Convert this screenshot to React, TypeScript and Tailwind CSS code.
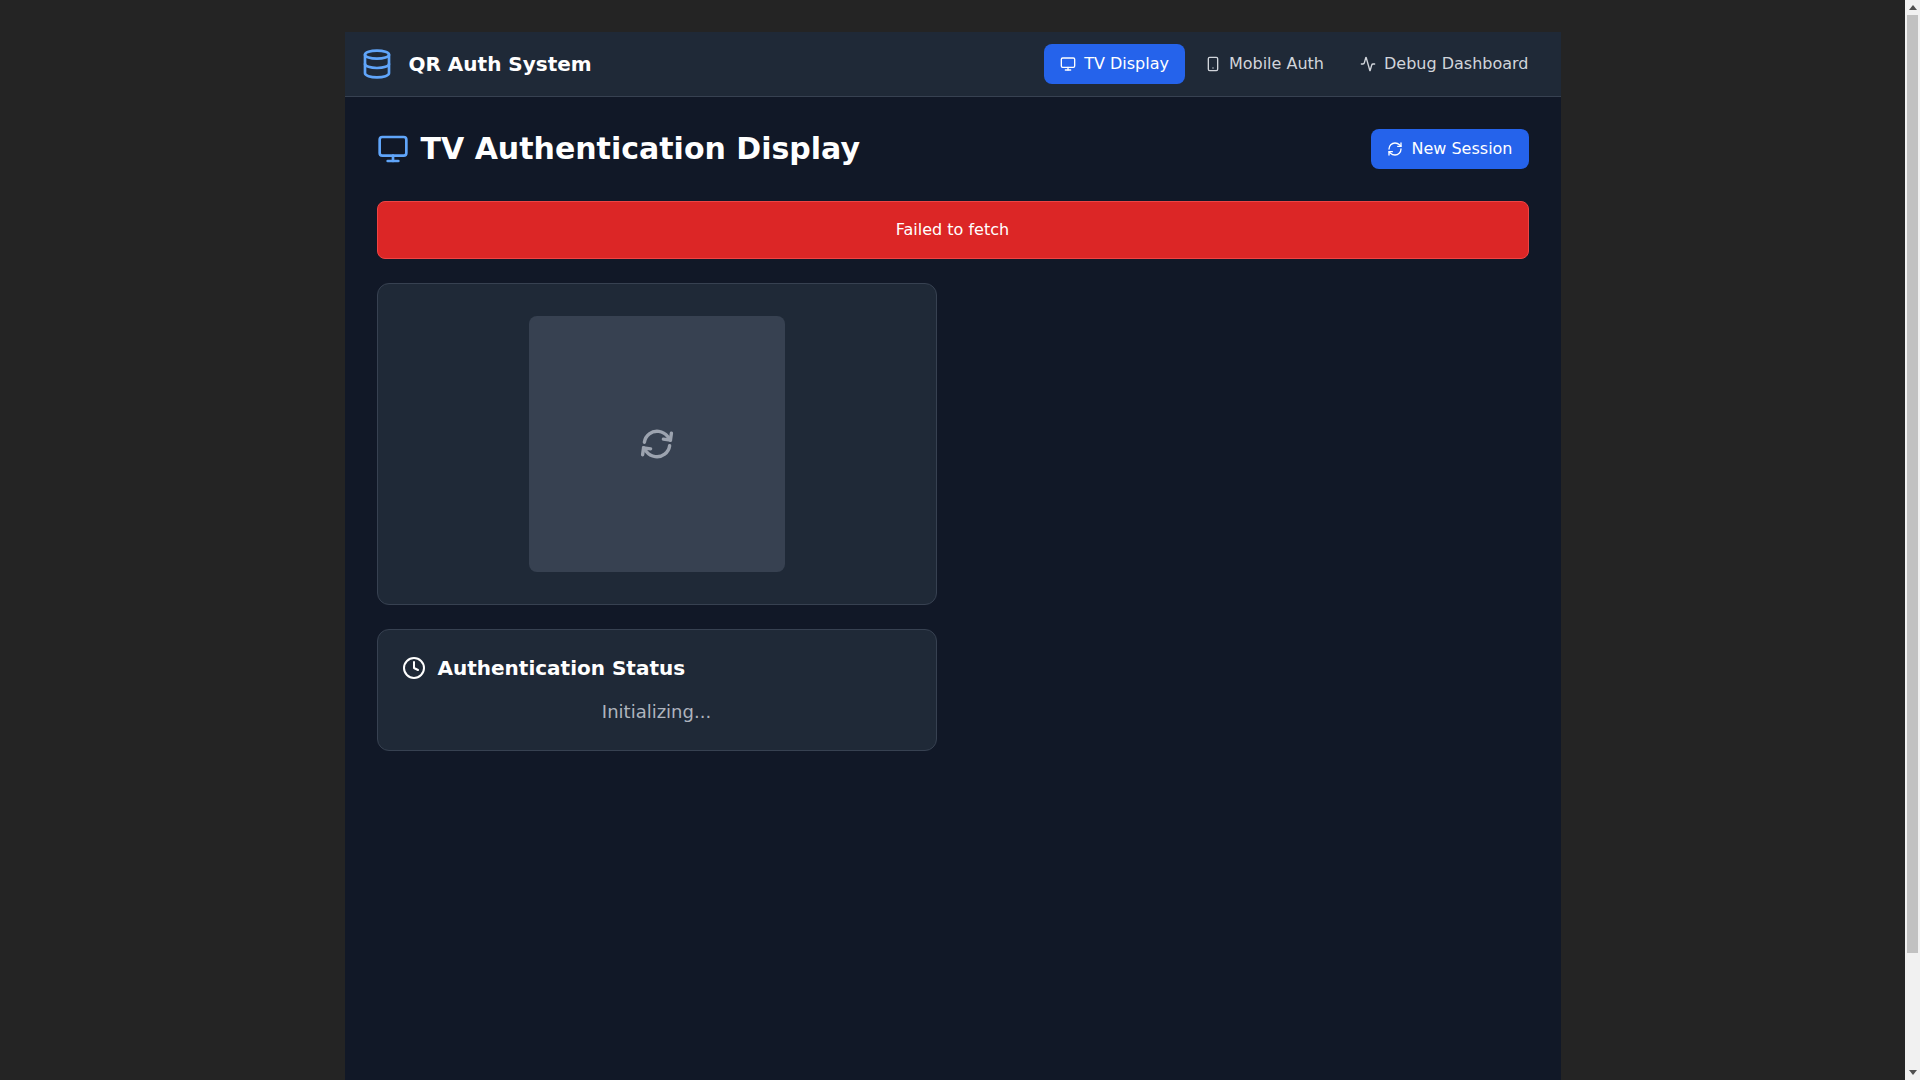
import { Database, Monitor, Smartphone, Activity, RefreshCw, Clock } from "lucide-react";

function PageScrollbar() {
  return (
    <div className="fixed top-0 right-0 flex h-screen w-[15px] flex-col items-center bg-[#f1f1f1]">
      <div className="flex h-[15px] w-full items-center justify-center">
        <svg width="8" height="5" viewBox="0 0 8 5" className="fill-[#505050]">
          <polygon points="4,0 8,5 0,5" />
        </svg>
      </div>
      <div className="h-[938px] w-[11px] bg-[#c1c1c1]" />
      <div className="flex-1" />
      <div className="flex h-[15px] w-full items-center justify-center">
        <svg width="8" height="5" viewBox="0 0 8 5" className="fill-[#505050]">
          <polygon points="0,0 8,0 4,5" />
        </svg>
      </div>
    </div>
  );
}

export default function App() {
  return (
    <div className="bg-[#242424] pr-[15px] font-['DejaVu_Sans',sans-serif] leading-[1.5]">
      <div className="mx-auto max-w-[1280px] p-8 text-center">
        <nav className="flex h-[65px] items-center justify-between border-b border-[#374151] bg-[#1f2937] px-4 text-white">
          <div className="flex items-center gap-4">
            <Database className="h-8 w-8 text-[#60a5fa]" />
            <span className="text-xl font-bold">QR Auth System</span>
          </div>
          <div className="flex items-center gap-1">
            <a className="flex items-center gap-2 rounded-lg bg-[#2563eb] px-4 py-2 text-white">
              <Monitor className="h-4 w-4" />
              TV Display
            </a>
            <a className="flex items-center gap-2 rounded-lg px-4 py-2 text-[#d1d5db]">
              <Smartphone className="h-4 w-4" />
              Mobile Auth
            </a>
            <a className="flex items-center gap-2 rounded-lg px-4 py-2 text-[#d1d5db]">
              <Activity className="h-4 w-4" />
              Debug Dashboard
            </a>
          </div>
        </nav>
        <main className="min-h-screen bg-[#111827] p-8 text-white">
          <div className="mb-8 flex items-center justify-between">
            <h1 className="flex items-center gap-3 text-3xl font-bold">
              <Monitor className="h-8 w-8 text-[#60a5fa]" />
              TV Authentication Display
            </h1>
            <button className="flex items-center gap-2 rounded-lg bg-[#2563eb] px-4 py-2 text-white">
              <RefreshCw className="h-4 w-4" />
              New Session
            </button>
          </div>
          <div className="mb-6 rounded-lg border border-[#ef4444] bg-[#dc2626] p-4 text-white">Failed to fetch</div>
          <div className="grid grid-cols-2 gap-8">
            <div className="flex flex-col gap-6">
              <div className="rounded-xl border border-[#374151] bg-[#1f2937] p-8">
                <div className="mx-auto flex h-64 w-64 items-center justify-center rounded-lg bg-[#374151]">
                  <RefreshCw className="h-[34px] w-[34px] rotate-[8deg] text-[#9ca3af]" strokeWidth={2.4} />
                </div>
              </div>
              <div className="rounded-xl border border-[#374151] bg-[#1f2937] p-6">
                <h2 className="mb-4 flex items-center gap-3 text-xl font-bold">
                  <Clock className="h-6 w-6" />
                  Authentication Status
                </h2>
                <p className="text-lg text-[#aeb4be]">Initializing...</p>
              </div>
            </div>
            <div />
          </div>
        </main>
      </div>
      <PageScrollbar />
    </div>
  );
}
